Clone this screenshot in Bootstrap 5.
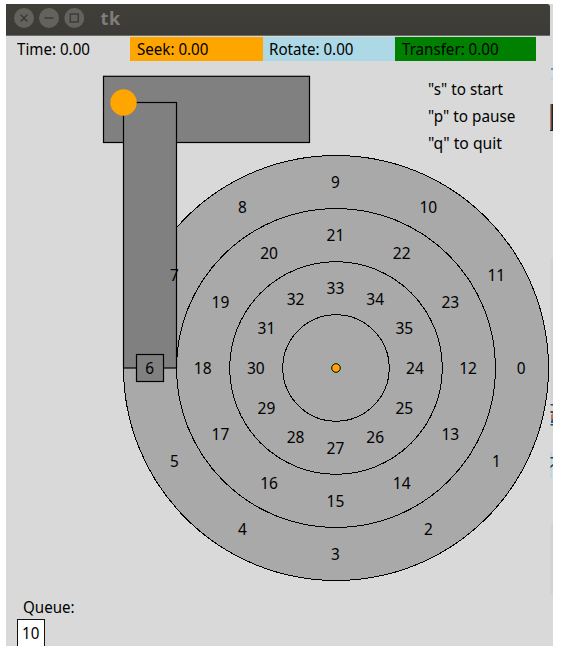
<!DOCTYPE html>
<html lang="en">
<head>
<meta charset="utf-8">
<title>tk</title>
<link href="https://cdn.jsdelivr.net/npm/bootstrap@5.3.0/dist/css/bootstrap.min.css" rel="stylesheet">
<style>
body{font:16px/24px "Noto Sans","Open Sans",sans-serif;color:#000;background:#fff}
.tkwin{width:547px;height:642px;margin:4px 0 0 6px;background:#d9d9d9}
.titlebar{width:544px;height:32px;background:linear-gradient(#3f3e39,#3c3b37);border-bottom:1px solid #6b6a66;border-radius:0 3px 0 0;padding-left:8px}
.wintitle{font-weight:700;font-size:18px;color:#807d78;margin-left:14.5px;line-height:28px;letter-spacing:.6px}
.stats{height:24px;margin-top:1px}
.stat{padding-left:7px;white-space:nowrap;line-height:25px}
.s-time{width:123.5px;padding-left:10.5px}
.s-seek{width:133px;background:#ffa500}
.s-rotate{width:132.5px;background:#add8e6;padding-left:6.5px}
.s-transfer{width:140.5px;background:#008000}
.sq{display:inline-block;transform-origin:0 50%;transform:scaleX(.945)}
.scene{display:block}
.scene text{fill:#000}
.queue-name{padding-left:17px;height:24px;line-height:24px}
.queue-item{width:28px;height:34px;margin-left:10.5px;border:1px solid #111;background:#fff;padding-left:4px;line-height:27px}
.queue{height:52px;padding-top:1px}
</style>
<script src="https://cdn.jsdelivr.net/npm/bootstrap@5.3.0/dist/js/bootstrap.bundle.min.js"></script>
</head>
<body class="overflow-hidden">
<main class="tkwin d-flex flex-column overflow-hidden">
  <header class="titlebar d-flex align-items-start flex-shrink-0">
    <svg width="72" height="31" viewBox="14 4 72 31" fill="none" stroke="#3d3c38" stroke-width="1.5">
      <g fill="#64625d" stroke="none"><circle cx="24" cy="18" r="10"/><circle cx="49" cy="18" r="10"/><circle cx="74.300" cy="18" r="10"/></g>
      <path d="M20.500 14.500l7 7m0-7l-7 7M44.500 18h9M70.300 14h8v8h-8z"/>
    </svg>
    <span class="wintitle">tk</span>
  </header>
  <section class="stats d-flex flex-shrink-0">
    <div class="stat s-time"><span class="sq">Time: 0.00</span></div>
    <div class="stat s-seek"><span class="sq">Seek: 0.00</span></div>
    <div class="stat s-rotate"><span class="sq">Rotate: 0.00</span></div>
    <div class="stat s-transfer"><span class="sq">Transfer: 0.00</span></div>
  </section>
  <svg class="scene flex-shrink-0" width="547" height="533" viewBox="6 61 547 533">
    <g fill="#a9a9a9" stroke="#000" shape-rendering="crispEdges">
      <circle cx="336" cy="368" r="212.500"/><circle cx="336" cy="368" r="159.500"/>
      <circle cx="336" cy="368" r="106.300"/><circle cx="336" cy="368" r="53.200"/>
    </g>
    <circle cx="336" cy="368" r="4.300" fill="#ffa500" stroke="#000"/>
    <g fill="#808080" stroke="#000" stroke-width="1.200">
      <rect x="103.500" y="76.300" width="206" height="66.200"/>
      <rect x="123.500" y="102.500" width="53" height="265.500"/>
      <rect x="136.500" y="354.500" width="27" height="27"/>
    </g>
    <circle cx="123.500" cy="102.500" r="13.200" fill="#ffa500"/>
    <g id="sectors" text-anchor="middle"></g>
    <text x="428" y="95.200" textLength="75" lengthAdjust="spacingAndGlyphs">"s" to start</text>
    <text x="428" y="122" textLength="87.500" lengthAdjust="spacingAndGlyphs">"p" to pause</text>
    <text x="428" y="148.500" textLength="74" lengthAdjust="spacingAndGlyphs">"q" to quit</text>
    <g stroke="none">
      <path fill="#6d8ccb" d="M551 68h2v2h-2z"/><path fill="#b9d5e2" d="M551 78h2v2h-2z"/>
      <path fill="#b8795b" d="M550 104h1.500v26H550z"/><path fill="#26222b" d="M551.300 104H553v27h-3v-1h1.300z"/>
      <path fill="#d2d2d2" d="M550.500 258H553v142h-2.500zM550.500 524H553v70h-2.500z"/>
      <path fill="#444" d="M550.500 404h2.500v1.500h-2.500zM550.500 411h2.500v2h-2.500zM550.500 424h2.500v1.500h-2.500z"/>
      <path fill="#bd7148" d="M551 415l2-2v5l-2 3z"/><path fill="#284f9c" d="M551 421l2-3v5h-2z"/>
      <path fill="#addbe1" d="M550.500 452h1.500v26h-1.500z"/><path fill="#333" d="M550.500 457h2.500v1.500h-2.500zM550.500 466l2.500-2v2l-2.500 2z"/>
    </g>
  </svg>
  <section class="queue">
    <div class="queue-name"><span class="sq">Queue:</span></div>
    <div class="queue-item"><span class="sq">10</span></div>
  </section>
</main>
<script>
// Twelve sectors per track, numbered clockwise from the right, outer track first
const g = document.getElementById('sectors');
const radii = [185.8, 132.7, 79.6];
for (let i = 0; i < 36; i++) {
  const r = radii[Math.floor(i / 12)], a = (i % 12) * Math.PI / 6;
  const t = document.createElementNS('http://www.w3.org/2000/svg', 'text');
  t.setAttribute('x', 335.4 + r * Math.cos(a));
  t.setAttribute('y', 374 + r * Math.sin(a));
  t.setAttribute('textLength', i < 10 ? 8.8 : 17.8);
  t.setAttribute('lengthAdjust', 'spacingAndGlyphs');
  t.textContent = i;
  g.appendChild(t);
}
</script>
</body>
</html>
